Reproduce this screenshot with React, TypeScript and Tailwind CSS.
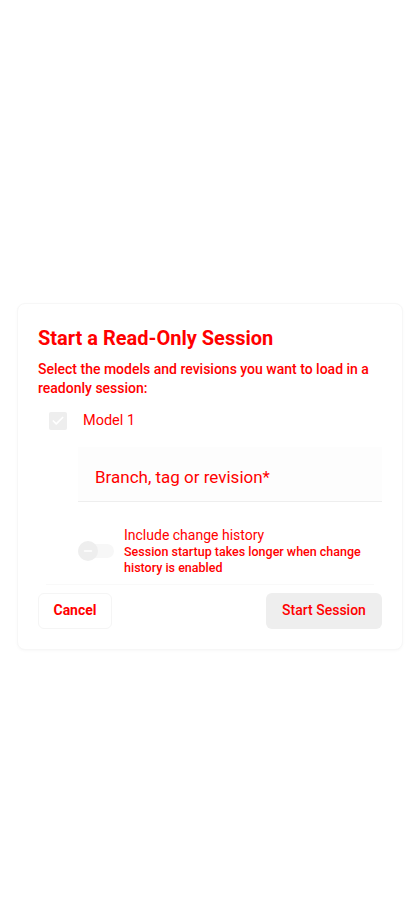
import { Check, Minus } from 'lucide-react'

const App = () => {
  return (
    <div className="flex min-h-[920px] w-[420px] justify-center bg-white pt-[303px] font-['Roboto',sans-serif]">
      <div className="h-fit w-[386px] rounded-lg border border-[#f7f7f7] bg-white px-5 pb-5 pt-5 text-[#ff0000] shadow-[0_1px_3px_rgba(0,0,0,0.03)]">
        <h2 className="mt-[2px] text-[20px] font-bold leading-6">Start a Read-Only Session</h2>
        <p className="mt-[10px] text-[14px] font-medium leading-[19px]">
          Select the models and revisions you want to load in a readonly session:
        </p>

        <div className="mt-3 flex items-center gap-4 pl-[11px]">
          <div className="flex h-[18px] w-[18px] items-center justify-center rounded-[2px] bg-[#eeeeee]">
            <Check className="h-3.5 w-3.5 text-white" strokeWidth={3} />
          </div>
          <span className="text-[14.5px]">Model 1</span>
        </div>

        <div className="ml-10 mt-[15px] flex h-[55px] items-center border-b border-[#eeeeee] bg-[#fdfdfd] px-[17px] pt-2">
          <span className="text-[17px]">Branch, tag or revision*</span>
        </div>

        <div className="ml-10 mt-6 flex items-start gap-[10px]">
          <div className="relative mt-[18px] h-[14px] w-[36px] shrink-0 rounded-full bg-[#f7f7f7]">
            <div className="absolute -top-[3px] left-0 flex h-5 w-5 items-center justify-center rounded-full bg-[#eeeeee]">
              <Minus className="h-3 w-3 text-white" strokeWidth={3} />
            </div>
          </div>
          <div>
            <div className="text-[14px] leading-[18px]">Include change history</div>
            <div className="text-[12.5px] font-medium leading-[16px]">
              Session startup takes longer when change history is enabled
            </div>
          </div>
        </div>

        <div className="mx-2 mt-2 border-t border-[#f9f9f9]" />

        <div className="mt-2 flex items-center justify-between">
          <button className="h-[36px] w-[74px] rounded-md border border-[#f5f5f5] bg-white text-[14px] font-bold">
            Cancel
          </button>
          <button className="h-[36px] w-[116px] rounded-md bg-[#eeeeee] text-[14px] font-medium">
            Start Session
          </button>
        </div>
      </div>
    </div>
  )
}

export default App
